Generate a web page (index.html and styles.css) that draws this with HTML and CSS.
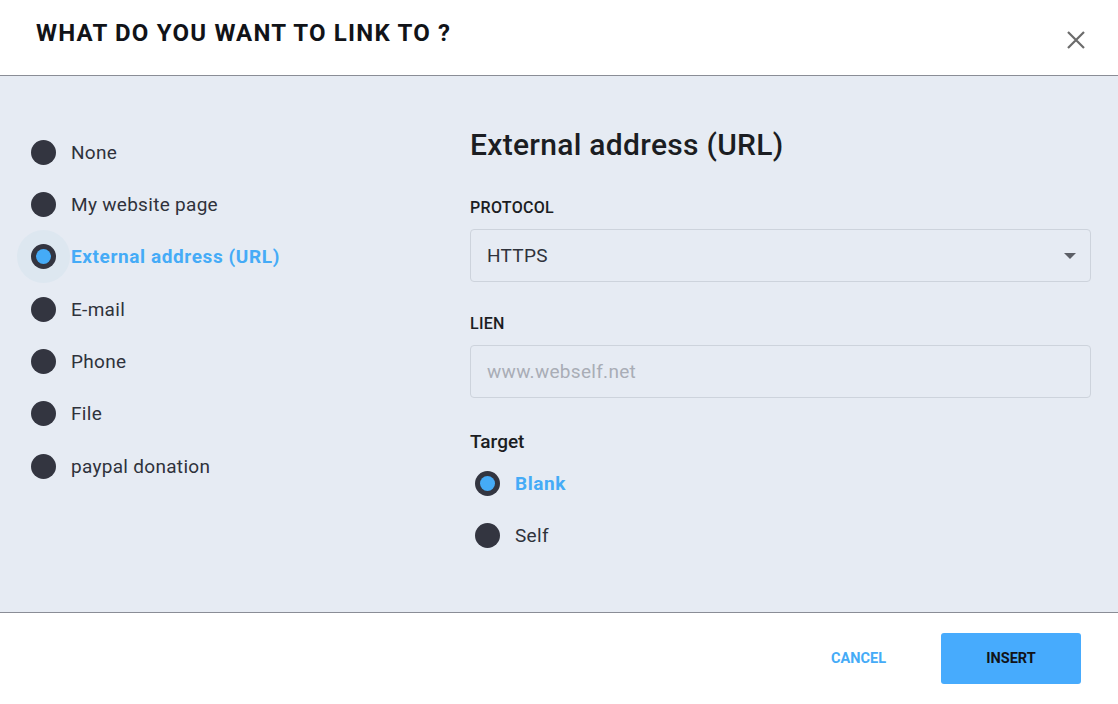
FILE: index.html
```html
<!DOCTYPE html>
<html>
<head>
<meta charset="utf-8">
<link rel="stylesheet" href="styles.css">
</head>
<body>
<div class="dialog">
  <header class="head">
    <h1 class="title">WHAT DO YOU WANT TO LINK TO ?</h1>
    <button class="close" aria-label="Close">
      <svg width="20" height="20" viewBox="0 0 20 20"><path d="M2 2 L18 18 M18 2 L2 18" stroke="#6b6b6b" stroke-width="2.2" fill="none"/></svg>
    </button>
  </header>
  <main class="body">
    <ul class="options">
      <li class="opt"><span class="radio"></span><span>None</span></li>
      <li class="opt"><span class="radio"></span><span>My website page</span></li>
      <li class="opt active"><span class="radio on halo"></span><span>External address (URL)</span></li>
      <li class="opt"><span class="radio"></span><span>E-mail</span></li>
      <li class="opt"><span class="radio"></span><span>Phone</span></li>
      <li class="opt"><span class="radio"></span><span>File</span></li>
      <li class="opt"><span class="radio"></span><span>paypal donation</span></li>
    </ul>
    <section class="form">
      <h2 class="form-title">External address (URL)</h2>
      <label class="label">PROTOCOL</label>
      <div class="field select"><span>HTTPS</span><span class="caret"></span></div>
      <label class="label lien">LIEN</label>
      <div class="field"><span class="ph">www.webself.net</span></div>
      <div class="target-label">Target</div>
      <div class="targets">
        <div class="topt active"><span class="radio on"></span><span>Blank</span></div>
        <div class="topt"><span class="radio"></span><span>Self</span></div>
      </div>
    </section>
  </main>
  <footer class="foot">
    <button class="cancel">CANCEL</button>
    <button class="insert">INSERT</button>
  </footer>
</div>
</body>
</html>
```
FILE: styles.css
```css
* { box-sizing: border-box; }
html, body { margin: 0; padding: 0; }
body {
  width: 1118px;
  height: 704px;
  background: #ffffff;
  font-family: Roboto, "Liberation Sans", sans-serif;
  color: #2f323b;
  overflow: hidden;
}
.dialog { display: flex; flex-direction: column; height: 704px; }
.head {
  height: 76px;
  flex: none;
  border-bottom: 1px solid #8a8d96;
  display: flex;
  align-items: flex-start;
  justify-content: space-between;
  padding: 0 32px 0 36px;
  background: #fff;
}
.title {
  margin: 18px 0 0 0;
  font-size: 24px;
  font-weight: 700;
  letter-spacing: 1.2px;
  color: #111318;
  line-height: 30px;
}
.close {
  margin-top: 30px;
  border: 0;
  background: none;
  padding: 0;
  width: 20px;
  height: 20px;
  display: flex;
}
.body {
  height: 537px;
  flex: none;
  background: #e6ebf3;
  border-bottom: 1px solid #8a8d96;
  display: flex;
}
.options {
  list-style: none;
  margin: 0;
  padding: 50px 0 0 31px;
  width: 470px;
  flex: none;
}
.opt {
  height: 52.33px;
  display: flex;
  align-items: center;
  gap: 15px;
  font-size: 19px;
  letter-spacing: 0.3px;
  color: #2f323b;
}
.opt.active, .topt.active { color: #45abf7; font-weight: 700; letter-spacing: 0.6px; }
.radio {
  position: relative;
  width: 25px;
  height: 25px;
  border-radius: 50%;
  background: #333540;
  flex: none;
}
.radio.halo { box-shadow: 0 0 0 14px #dde7f0; }
.radio.on::after {
  content: "";
  position: absolute;
  left: 5px; top: 5px;
  width: 15px; height: 15px;
  border-radius: 50%;
  background: #45abf7;
}
.form {
  flex: 1;
  padding: 51px 27px 0 0;
  display: flex;
  flex-direction: column;
}
.form > * { flex: none; }
.form-title {
  margin: 0;
  font-size: 30px;
  font-weight: 500;
  letter-spacing: 0.3px;
  line-height: 36px;
  color: #1b1d22;
}
.label {
  margin-top: 35px;
  font-size: 16px;
  font-weight: 500;
  letter-spacing: 0.3px;
  color: #1b1d22;
  line-height: 20px;
}
.label.lien { margin-top: 32px; }
.field {
  margin-top: 11px;
  height: 53px;
  border: 1px solid #cdd3dc;
  border-radius: 4px;
  display: flex;
  align-items: center;
  justify-content: space-between;
  padding: 0 14px 0 16px;
  font-size: 19px;
  letter-spacing: 0.3px;
  color: #2f323b;
}
.ph { color: #a9adb6; }
.caret {
  width: 0; height: 0;
  border-left: 6px solid transparent;
  border-right: 6px solid transparent;
  border-top: 6px solid #5c5f66;
}
.target-label {
  margin-top: 32px;
  font-size: 19px;
  font-weight: 500;
  color: #1b1d22;
  line-height: 24px;
}
.targets { padding-left: 5px; margin-top: 3px; }
.topt {
  height: 52.5px;
  display: flex;
  align-items: center;
  gap: 15px;
  font-size: 19px;
  letter-spacing: 0.3px;
  color: #2f323b;
}
.foot {
  flex: 1;
  display: flex;
  align-items: center;
  justify-content: flex-end;
  padding: 0 37px 0 0;
  gap: 55px;
  background: #fff;
}
.cancel {
  border: 0;
  background: none;
  font-family: inherit;
  font-size: 14.5px;
  font-weight: 700;
  color: #45abf7;
  padding: 0;
}
.insert {
  width: 140px;
  height: 51px;
  border: 0;
  border-radius: 3px;
  background: #47abfd;
  font-family: inherit;
  font-size: 14.5px;
  font-weight: 700;
  color: #111318;
}
```
